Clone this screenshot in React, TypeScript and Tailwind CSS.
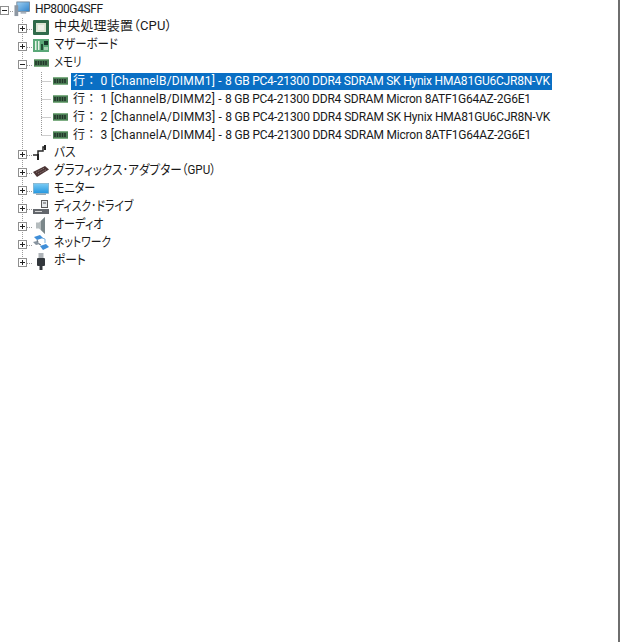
import React from "react";

const font = { fontFamily: 'Roboto, "Noto Sans CJK JP", sans-serif' };

const Box = ({ x, y = 11, open }: { x: number; y?: number; open?: boolean }) => (
  <g>
    <rect x={x + 0.5} y={y - 4.5} width={8} height={8} fill="#fff" stroke="#8f8f8f" />
    <path d={`M${x + 2} ${y - 0.5}h5`} stroke="#222" />
    {!open && <path d={`M${x + 4.5} ${y - 3}v5`} stroke="#222" />}
  </g>
);

const Dot = ({ d }: { d: string }) => <path d={d} stroke="#9a9a9a" strokeDasharray="1 1" fill="none" />;

const Cpu = () => (
  <svg width="16" height="15" viewBox="0 0 16 15">
    <rect width="16" height="15" rx="1" fill="#2f6a4a" />
    <rect x="3" y="3" width="10" height="9" fill="#dce5d4" />
    <rect x="5" y="5" width="6" height="5" fill="#eef2ea" />
  </svg>
);
const Board = () => (
  <svg width="16" height="13" viewBox="0 0 16 13">
    <rect width="16" height="13" fill="#5aa878" />
    <rect x="2" y="2" width="1.5" height="9" fill="#e6f2e6" />
    <rect x="5" y="2" width="1.5" height="9" fill="#e6f2e6" />
    <rect x="8" y="5" width="2" height="6" fill="#245238" />
    <rect x="11" y="2" width="4" height="4" fill="#17382a" />
    <rect x="11" y="8" width="4" height="3" fill="#a7d3b5" />
  </svg>
);
const Ram = () => (
  <svg width="15" height="8" viewBox="0 0 15 8">
    <rect width="15" height="8" fill="#4d8057" />
    <rect y="0" width="15" height="1" fill="#7fae84" />
    <rect y="7" width="15" height="1" fill="#7fae84" />
    <path d="M2 2v4M4.5 2v4M7 2v4M9.5 2v4M12 2v4" stroke="#22352a" strokeWidth="1.6" />
  </svg>
);
const Pc = () => (
  <svg width="17" height="16" viewBox="0 0 17 16">
    <defs>
      <linearGradient id="pcScreen" x1="0" y1="0" x2="1" y2="1">
        <stop offset="0" stopColor="#9fd0f2" />
        <stop offset="1" stopColor="#2f83cc" />
      </linearGradient>
    </defs>
    <rect x="3" y="0.5" width="13.5" height="10" fill="url(#pcScreen)" stroke="#66788a" strokeWidth="0.8" />
    <rect x="0.5" y="4" width="4" height="11.5" fill="#8d97a2" />
    <rect x="7" y="11" width="6" height="2" fill="#aab4be" />
  </svg>
);
const Bus = () => (
  <svg width="16" height="16" viewBox="0 0 16 16" fill="none">
    <path d="M0 10h5V6h5V2h3" stroke="#2a2a2a" strokeWidth="1.5" />
    <path d="M5 9v6" stroke="#222" strokeWidth="2" />
    <path d="M12 0v5" stroke="#222" strokeWidth="2" />
  </svg>
);
const Gpu = () => (
  <svg width="16" height="11" viewBox="0 0 16 11">
    <path d="M0 6 L12 0 L16 3.5 L4 11Z" fill="#4a3434" />
    <path d="M3 6.5 L11.5 2 M5 8 L13.5 3.5" stroke="#8a7676" strokeDasharray="1.5 1" />
  </svg>
);
const Monitor = () => (
  <svg width="16" height="12" viewBox="0 0 16 12">
    <defs>
      <linearGradient id="monScreen" x1="0" y1="0" x2="0" y2="1">
        <stop offset="0" stopColor="#7cccf4" />
        <stop offset="1" stopColor="#2497e0" />
      </linearGradient>
    </defs>
    <rect x="0.3" y="0.3" width="15.4" height="10" fill="url(#monScreen)" stroke="#7fa8c0" strokeWidth="0.6" />
    <rect x="3" y="10.5" width="10" height="1.5" fill="#9aa8b2" />
  </svg>
);
const Disk = () => (
  <svg width="16" height="15" viewBox="0 0 16 15">
    <rect x="8.5" y="0.5" width="6" height="7" fill="#e6e9ec" stroke="#5a5a5a" />
    <path d="M10 3h3" stroke="#5a5a5a" />
    <rect x="0" y="9" width="16" height="5" fill="#63676c" />
    <rect x="2" y="11" width="7" height="1" fill="#d4d4d4" />
  </svg>
);
const Speaker = () => (
  <svg width="10" height="17" viewBox="0 0 10 17">
    <path d="M0 5.5h3L9 0v17l-6-5.5H0Z" fill="#b5bcbe" />
    <path d="M5 4L9 0v17l-4-4Z" fill="#7b878a" />
  </svg>
);
const Net = () => (
  <svg width="16" height="16" viewBox="0 0 16 16">
    <path d="M1 2l6-2 3 3-6 2Z" fill="#3f8ed8" />
    <path d="M7 11l6-2 3 3-6 3Z" fill="#3f8ed8" />
    <path d="M0 7l4-1 3 3-4 1Z" fill="#87939e" />
    <path d="M4 5l1 2M6 9l2 1" stroke="#5a6670" />
    <path d="M9 3l3 1v4" stroke="#79b0de" fill="none" />
  </svg>
);
const Port = () => (
  <svg width="8" height="17" viewBox="0 0 8 17">
    <rect x="1.5" y="0" width="5" height="5" fill="#aeb3b8" />
    <rect x="0" y="5" width="8" height="8" rx="1" fill="#32373c" />
    <rect x="2.5" y="13" width="3" height="4" fill="#32373c" />
  </svg>
);

const Row = ({ width, guide, icon, iconBox, selected, children }: {
  width: number;
  guide: React.ReactNode;
  icon: React.ReactNode;
  iconBox: string;
  selected?: boolean;
  children: React.ReactNode;
}) => (
  <div className="flex h-[18px] items-center">
    <svg width={width} height="18" className="shrink-0">{guide}</svg>
    <div className={`flex shrink-0 items-center justify-center ${iconBox}`}>{icon}</div>
    <span className={`ml-[3px] flex h-[17px] items-center whitespace-pre px-[2px] leading-none ${selected ? "bg-[#0a6fc4] text-white" : "text-[#1a1a1a]"}`}>{children}</span>
  </div>
);

const Jp = ({ className, children }: { className: string; children: React.ReactNode }) => (
  <span className={`-mt-[3px] inline-block origin-left text-[13px] [font-feature-settings:'palt'] ${className}`}>{children}</span>
);

const mem: [string, string][] = [
  ["行： 0 [ChannelB/DIMM1] - ", "8 GB PC4-21300 DDR4 SDRAM SK Hynix HMA81GU6CJR8N-VK"],
  ["行： 1 [ChannelB/DIMM2] - ", "8 GB PC4-21300 DDR4 SDRAM Micron 8ATF1G64AZ-2G6E1"],
  ["行： 2 [ChannelA/DIMM3] - ", "8 GB PC4-21300 DDR4 SDRAM SK Hynix HMA81GU6CJR8N-VK"],
  ["行： 3 [ChannelA/DIMM4] - ", "8 GB PC4-21300 DDR4 SDRAM Micron 8ATF1G64AZ-2G6E1"],
];
const rest: [string, React.ReactNode, string][] = [
  ["バス", <Bus />, "scale-x-[0.9]"],
  ["グラフィックス･アダプター（GPU）", <Gpu />, "scale-x-[0.89]"],
  ["モニター", <Monitor />, "scale-x-[0.85]"],
  ["ディスク･ドライブ", <Disk />, "scale-x-[0.83]"],
  ["オーディオ", <Speaker />, "scale-x-[0.85]"],
  ["ネットワーク", <Net />, "scale-x-[0.83]"],
  ["ポート", <Port />, "scale-x-[0.9]"],
];

export default function App() {
  return (
    <div className="h-[642px] w-[623px] overflow-hidden bg-white" style={font}>
      <div className="h-[642px] w-[620px] border-r-2 border-[#6e6e6e]">
        <Row
          width={14}
          iconBox="w-[16px]"
          icon={<Pc />}
          guide={<><Dot d="M8 11.5h6" /><Box x={0} open /></>}
        >
          <span className="text-[12px] tracking-[-0.4px]">HP800G4SFF</span>
        </Row>
        <Row
          width={33}
          iconBox="w-[16px]"
          icon={<Cpu />}
          guide={<><Dot d="M22.5 0v18M27 11.5h6" /><Box x={18} /></>}
        >
          <Jp className="tracking-[0.2px]">中央処理装置（CPU）</Jp>
        </Row>
        <Row
          width={33}
          iconBox="w-[16px]"
          icon={<Board />}
          guide={<><Dot d="M22.5 0v18M27 11.5h6" /><Box x={18} /></>}
        >
          <Jp className="scale-x-[0.88]">マザーボード</Jp>
        </Row>
        <Row
          width={33}
          iconBox="w-[16px]"
          icon={<Ram />}
          guide={<><Dot d="M22.5 0v18M27 11.5h6" /><Box x={18} open /></>}
        >
          <Jp className="scale-x-[0.8]">メモリ</Jp>
        </Row>
        {mem.map(([head, tail], i) => (
          <Row
            key={head}
            width={52}
            iconBox="w-[16px]"
            icon={<Ram />}
            selected={i === 0}
            guide={<Dot d={`M22.5 0v18M41.5 0v${i === 3 ? 9 : 18}M41.5 9.5h10`} />}
          >
            <span className="text-[12px] tracking-[0.2px]">{head}</span>
            <span className="text-[12px] tracking-[-0.22px]">{tail}</span>
          </Row>
        ))}
        {rest.map(([t, ic, scale], i) => (
          <Row
            key={t}
            width={33}
            iconBox="w-[16px]"
            icon={ic}
            guide={<><Dot d={`M22.5 0v${i === rest.length - 1 ? 11 : 18}M27 11.5h6`} /><Box x={18} /></>}
          >
            <Jp className={scale}>{t}</Jp>
          </Row>
        ))}
      </div>
    </div>
  );
}
